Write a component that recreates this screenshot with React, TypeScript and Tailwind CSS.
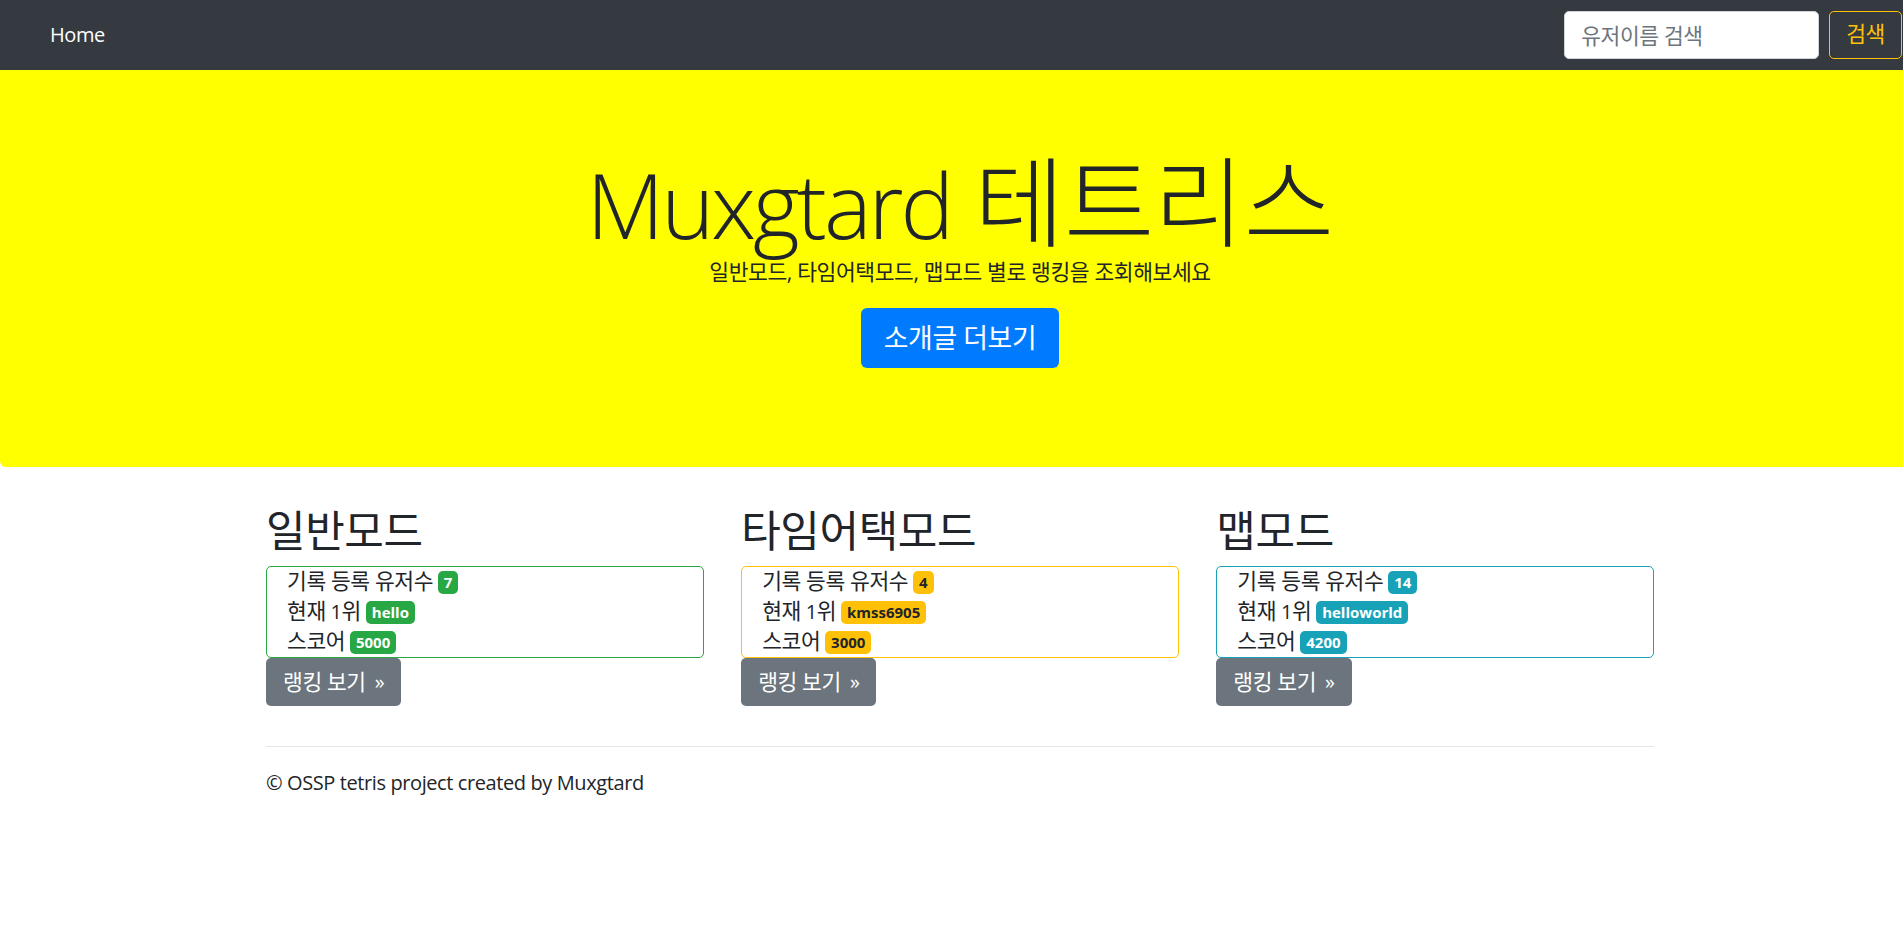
import React from 'react'

// Korean runs are set a little larger so Noto Sans CJK matches the wider Malgun Gothic
function K({ children, size = 'text-[1.075em]' }: { children: React.ReactNode; size?: string }) {
    return <span className={`${size} leading-none`}>{children}</span>
}

const modes = [
    { title: '일반모드', users: '7', top: 'hello', score: '5000', border: 'border-[#28a745]', badge: 'bg-[#28a745] text-white' },
    { title: '타임어택모드', users: '4', top: 'kmss6905', score: '3000', border: 'border-[#ffc107]', badge: 'bg-[#ffc107] text-[#212529]' },
    { title: '맵모드', users: '14', top: 'helloworld', score: '4200', border: 'border-[#17a2b8]', badge: 'bg-[#17a2b8] text-white' },
]

function Badge({ className, children }: { className: string; children: React.ReactNode }) {
    return (
        <span className={`inline-block px-[6px] py-[4px] text-[15px] font-bold leading-none rounded-[5px] align-[1px] tracking-normal ${className}`}>
            {children}
        </span>
    )
}

export default function App() {
    return (
        <div className="w-full min-h-screen overflow-hidden bg-white">
            <div className="w-[1920px] text-[#212529] tracking-[-0.4px] font-['Segoe_UI','Open_Sans','Noto_Sans_CJK_KR',sans-serif]">
                <nav className="h-[70px] bg-[#343a40] flex items-center justify-between pl-[50px] pr-[18px]">
                    <a href="#" className="text-white text-[20px]">Home</a>
                    <form className="flex items-center gap-[10px]" onSubmit={(e) => e.preventDefault()}>
                        <input
                            type="text"
                            placeholder="유저이름 검색"
                            className="w-[255px] h-[48px] rounded-[5px] border border-[#ced4da] bg-white px-[16px] text-[21.5px] placeholder:text-[#6c757d] focus:outline-none"
                        />
                        <button type="submit" className="h-[48px] px-[16px] border border-[#ffc107] text-[#ffc107] rounded-[5px] text-[20px]">
                            <K>검색</K>
                        </button>
                    </form>
                </nav>

                <section className="bg-[#ffff00] rounded-b-[6px] pt-[80px] pb-[79px] text-center">
                    <h1 className="text-[90px] font-light leading-[108px]">
                        <span className="tracking-[-3px]">Muxgtard</span> <K size="text-[1.09em]">테트리스</K>
                    </h1>
                    <p className="text-[20px] leading-[30px]">
                        <K>일반모드, 타임어택모드, 맵모드 별로 랭킹을 조회해보세요</K>
                    </p>
                    <p className="mt-[20px] mb-[20px]">
                        <a href="#" className="inline-flex items-center h-[60px] px-[23px] bg-[#007bff] text-white text-[25px] rounded-[6px]">
                            <K>소개글 더보기</K>
                        </a>
                    </p>
                </section>

                <main className="mx-auto w-[1388px]">
                    <div className="mt-[41px] grid grid-cols-3 gap-x-[37.5px]">
                        {modes.map((m) => (
                            <div key={m.title}>
                                <h2 className="text-[40px] leading-[48px] font-normal mb-[10px]">
                                    <K>{m.title}</K>
                                </h2>
                                <div className={`border rounded-[5px] pl-[20px] text-[20px] leading-[30px] ${m.border}`}>
                                    <div><K>기록 등록 유저수</K> <Badge className={m.badge}>{m.users}</Badge></div>
                                    <div><K>현재</K> 1<K>위</K> <Badge className={m.badge}>{m.top}</Badge></div>
                                    <div><K>스코어</K> <Badge className={m.badge}>{m.score}</Badge></div>
                                </div>
                                <a href="#" className="inline-flex items-center h-[48px] px-[17px] bg-[#6c757d] text-white text-[20px] rounded-[5px]">
                                    <K>랭킹 보기</K>
                                    <span className="ml-[9px]">»</span>
                                </a>
                            </div>
                        ))}
                    </div>

                    <hr className="mt-[40px] border-0 border-t border-[#e5e5e5]" />
                    <footer className="mt-[21px] text-[20px] leading-[30px]">
                        © OSSP tetris project created by Muxgtard
                    </footer>
                </main>
            </div>
        </div>
    )
}
